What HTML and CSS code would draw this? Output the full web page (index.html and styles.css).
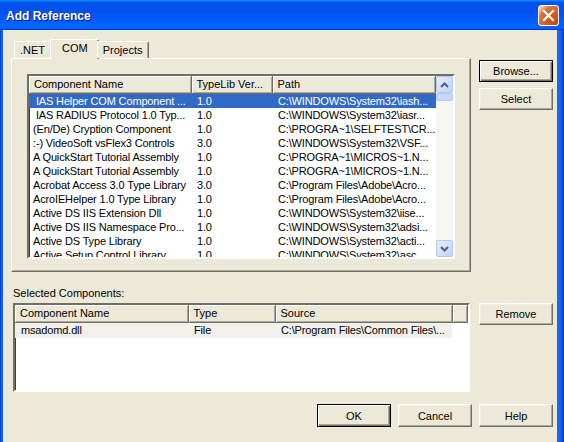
FILE: index.html
```html
<!DOCTYPE html>
<html lang="en">
<head>
    <meta charset="UTF-8">
    <title>Add Reference</title>
    <link rel="stylesheet" href="styles.css">
</head>
<body>
    <div class="window">
        <div class="titlebar">
            <span class="title">Add Reference</span>
            <div class="close">
                <svg width="13" height="13" viewBox="0 0 13 13">
                    <path d="M2 2 L11 11 M11 2 L2 11" stroke="#fff" stroke-width="2.2" stroke-linecap="square"/>
                </svg>
            </div>
        </div>

        <div class="client">
            <div class="top">
                <div class="tabs">
                    <div class="tabstrip">
                        <div class="tab">.NET</div>
                        <div class="tab active">COM</div>
                        <div class="tab">Projects</div>
                    </div>
                    <div class="tabpanel">
                        <div class="listview lv-com">
                            <div class="lv-main">
                                <table class="lv-table">
                                    <colgroup>
                                        <col style="width: 162px">
                                        <col style="width: 81px">
                                        <col>
                                    </colgroup>
                                    <thead>
                                        <tr><th>Component Name</th><th>TypeLib Ver...</th><th>Path</th></tr>
                                    </thead>
                                    <tbody>
                                        <tr class="sel"><td> IAS Helper COM Component ...</td><td>1.0</td><td>C:\WINDOWS\System32\iash...</td></tr>
                                        <tr><td> IAS RADIUS Protocol 1.0 Typ...</td><td>1.0</td><td>C:\WINDOWS\System32\iasr...</td></tr>
                                        <tr><td>(En/De) Cryption Component</td><td>1.0</td><td>C:\PROGRA~1\SELFTEST\CR...</td></tr>
                                        <tr><td>:-) VideoSoft vsFlex3 Controls</td><td>3.0</td><td>C:\WINDOWS\System32\VSF...</td></tr>
                                        <tr><td>A QuickStart Tutorial Assembly</td><td>1.0</td><td>C:\PROGRA~1\MICROS~1.N...</td></tr>
                                        <tr><td>A QuickStart Tutorial Assembly</td><td>1.0</td><td>C:\PROGRA~1\MICROS~1.N...</td></tr>
                                        <tr><td>Acrobat Access 3.0 Type Library</td><td>3.0</td><td>C:\Program Files\Adobe\Acro...</td></tr>
                                        <tr><td>AcroIEHelper 1.0 Type Library</td><td>1.0</td><td>C:\Program Files\Adobe\Acro...</td></tr>
                                        <tr><td>Active DS IIS Extension Dll</td><td>1.0</td><td>C:\WINDOWS\System32\iise...</td></tr>
                                        <tr><td>Active DS IIS Namespace Pro...</td><td>1.0</td><td>C:\WINDOWS\System32\adsi...</td></tr>
                                        <tr><td>Active DS Type Library</td><td>1.0</td><td>C:\WINDOWS\System32\acti...</td></tr>
                                        <tr><td>Active Setup Control Library</td><td>1.0</td><td>C:\WINDOWS\System32\asc...</td></tr>
                                    </tbody>
                                </table>
                            </div>
                            <div class="vscroll">
                                <div class="sb-btn">
                                    <svg width="9" height="6" viewBox="0 0 9 6"><path d="M1 5 L4.5 1.5 L8 5" fill="none" stroke="#4d6185" stroke-width="2"/></svg>
                                </div>
                                <div class="sb-thumb"></div>
                                <div class="sb-track"></div>
                                <div class="sb-btn">
                                    <svg width="9" height="6" viewBox="0 0 9 6"><path d="M1 1 L4.5 4.5 L8 1" fill="none" stroke="#4d6185" stroke-width="2"/></svg>
                                </div>
                            </div>
                        </div>
                    </div>
                </div>
                <div class="side">
                    <button class="btn default">Browse...</button>
                    <button class="btn">Select</button>
                </div>
            </div>

            <div class="selected">
                <div class="label">Selected Components:</div>
                <div class="selected-row">
                    <div class="listview lv-sel">
                        <table class="lv-table">
                            <colgroup>
                                <col style="width: 173px">
                                <col style="width: 87px">
                                <col style="width: 177px">
                                <col>
                            </colgroup>
                            <thead>
                                <tr><th>Component Name</th><th>Type</th><th>Source</th><th></th></tr>
                            </thead>
                            <tbody>
                                <tr class="inactive"><td>msadomd.dll</td><td>File</td><td>C:\Program Files\Common Files\...</td><td class="blank"></td></tr>
                            </tbody>
                        </table>
                    </div>
                    <button class="btn">Remove</button>
                </div>
            </div>

            <div class="footer">
                <button class="btn default">OK</button>
                <button class="btn">Cancel</button>
                <button class="btn">Help</button>
            </div>
        </div>
    </div>
</body>
</html>
```

FILE: styles.css
```css
* {
    box-sizing: border-box;
}
body {
    margin: 0;
    font-family: 'Liberation Sans', Arial, sans-serif;
    font-size: 11px;
    color: #000;
    background-color: #ece9d8;
    overflow: hidden;
}
.window {
    width: 564px;
    height: 442px;
    display: flex;
    flex-direction: column;
    background: linear-gradient(90deg, #0831d9 0, #166aee 2px, #0b5ce8 50%, #166aee calc(100% - 4px), #0831d9 100%);
}
.titlebar {
    height: 30px;
    flex: none;
    display: flex;
    align-items: center;
    justify-content: space-between;
    padding: 0 5px 0 6px;
    background: linear-gradient(180deg, #0997ff, #0053ee 8%, #0050ee 40%, #06f 88%, #06f 93%, #005bff 95%, #003dd7 96%, #003dd7);
}
.title {
    color: #fff;
    font-weight: bold;
    font-size: 12px;
    text-shadow: 1px 1px #0f1089;
    padding-top: 1px;
}
.close {
    width: 21px;
    height: 21px;
    border: 1px solid #fff;
    border-radius: 3px;
    display: flex;
    align-items: center;
    justify-content: center;
    background: radial-gradient(circle at 90% 90%, #cc4600 0%, #dc6527 55%, #cd7546 70%, #ffccb2 90%, #fff 100%);
}
.client {
    flex: 1;
    margin: 0 7px 0 3px;
    background-color: #ece9d8;
    padding: 9px 4px 0 8px;
}
.top {
    display: flex;
    gap: 8px;
}
.tabs {
    width: 460px;
}
.tabstrip {
    height: 19px;
    display: flex;
    align-items: flex-end;
    padding-left: 3px;
    position: relative;
    z-index: 1;
}
.tab {
    height: 17px;
    line-height: 16px;
    padding: 0 6px 0 5px;
    border: 1px solid #fff;
    border-right-color: #716f64;
    border-bottom: none;
    border-radius: 2px 2px 0 0;
    box-shadow: inset -1px 0 #aca899;
    background-color: #ece9d8;
}
.tab.active {
    height: 20px;
    margin: 0 -2px -1px -2px;
    padding: 0 10px 0 11px;
    line-height: 17px;
}
.tabpanel {
    height: 214px;
    border: 1px solid #fff;
    border-right-color: #716f64;
    border-bottom-color: #716f64;
    box-shadow: inset -1px -1px #aca899;
    padding: 15px 0 0 15px;
}
.listview {
    background-color: #fff;
    border: 2px solid;
    border-color: #716f64 #fff #fff #716f64;
    box-shadow: inset 1px 1px #404040;
    overflow: hidden;
}
.lv-com {
    width: 428px;
    height: 185px;
    display: flex;
}
.lv-main {
    flex: 1;
    overflow: hidden;
}
.lv-table {
    width: 100%;
    table-layout: fixed;
    border-collapse: collapse;
}
.lv-table th {
    height: 17px;
    padding: 0 5px;
    font-weight: normal;
    text-align: left;
    white-space: nowrap;
    overflow: hidden;
    background-color: #ece9d8;
    border-right: 1px solid #716f64;
    border-bottom: 1px solid #716f64;
    box-shadow: inset 1px 1px #fff, inset -1px -1px #aca899;
}
.lv-table td {
    height: 14px;
    line-height: 14px;
    padding: 0 6px;
    white-space: pre;
    overflow: hidden;
    letter-spacing: -0.15px;
}
.lv-com td:first-child {
    padding-left: 4px;
}
.lv-table tr.sel td {
    background-color: #316ac5;
    color: #fff;
}
.lv-table tr.inactive td {
    height: 16px;
    background-color: #f1f0ea;
}
.lv-table tr.inactive td.blank {
    background-color: #fff;
}
.vscroll {
    width: 17px;
    display: flex;
    flex-direction: column;
    background-color: #f7f6f1;
}
.sb-btn {
    height: 17px;
    flex: none;
    display: flex;
    align-items: center;
    justify-content: center;
    border: 1px solid #b4c8f6;
    border-radius: 2px;
    background: linear-gradient(135deg, #e6eefc, #c1d3fb);
}
.sb-thumb {
    height: 8px;
    flex: none;
    border: 1px solid #b4c8f6;
    border-radius: 2px;
    background-color: #c8d6fb;
}
.sb-track {
    flex: 1;
}
.side {
    width: 74px;
    padding-top: 21px;
    display: flex;
    flex-direction: column;
    gap: 6px;
}
.btn {
    width: 74px;
    height: 22px;
    padding: 0;
    font-family: inherit;
    font-size: 11px;
    color: #000;
    background-color: #ece9d8;
    border: 1px solid;
    border-color: #fff #716f64 #716f64 #fff;
    box-shadow: inset -1px -1px #aca899, inset 1px 1px #f1efe2;
}
.btn.default {
    border: 1px solid #000;
    box-shadow: inset 1px 1px #fff, inset -1px -1px #716f64, inset -2px -2px #aca899;
}
.selected {
    padding-left: 2px;
}
.label {
    margin-top: 14px;
    line-height: 14px;
}
.selected-row {
    margin-top: 3px;
    display: flex;
    align-items: flex-start;
    gap: 9px;
}
.lv-sel {
    width: 457px;
    height: 89px;
}
.footer {
    margin-top: 12px;
    display: flex;
    justify-content: flex-end;
    gap: 7px;
}
.footer .btn {
    height: 23px;
}
```
